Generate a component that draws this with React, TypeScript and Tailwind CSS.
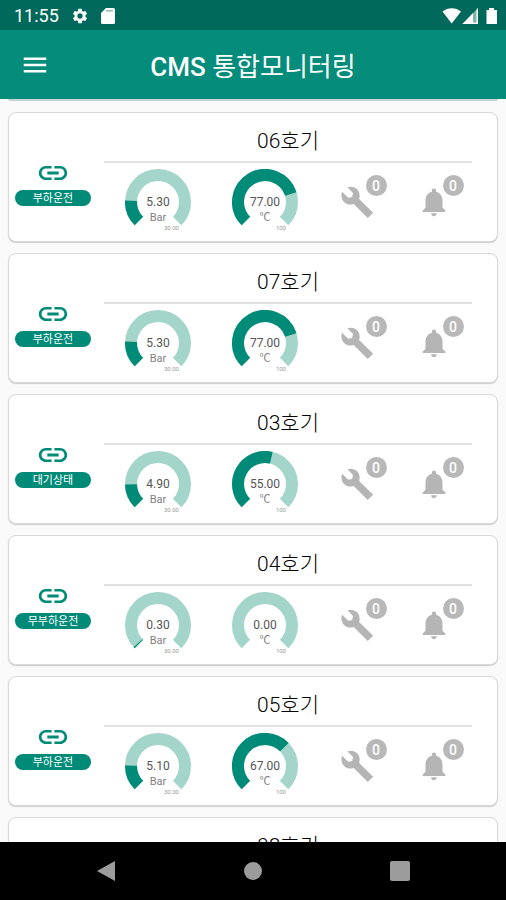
import React from "react";
import { MdLink, MdMenu, MdNotifications, MdSettings } from "react-icons/md";

type Machine = {
  name: string;
  status: string;
  pressure: number;
  temperature: number;
};

const machines: Machine[] = [
  { name: "06호기", status: "부하운전", pressure: 5.3, temperature: 77 },
  { name: "07호기", status: "부하운전", pressure: 5.3, temperature: 77 },
  { name: "03호기", status: "대기상태", pressure: 4.9, temperature: 55 },
  { name: "04호기", status: "무부하운전", pressure: 0.3, temperature: 0 },
  { name: "05호기", status: "부하운전", pressure: 5.1, temperature: 67 },
  { name: "08호기", status: "부하운전", pressure: 5.1, temperature: 67 },
];

// Ring segment that starts at the lower left and runs clockwise over 270 degrees.
function arc(fraction: number): string {
  const r = 27;
  const point = (f: number) => {
    const a = ((135 + 270 * f) * Math.PI) / 180;
    return `${(33 + r * Math.cos(a)).toFixed(2)} ${(33 + r * Math.sin(a)).toFixed(2)}`;
  };
  const large = fraction * 270 > 180 ? 1 : 0;
  return `M${point(0)} A${r} ${r} 0 ${large} 1 ${point(fraction)}`;
}

function Gauge({
  value,
  max,
  unit,
  maxLabel,
}: {
  value: number;
  max: number;
  unit: string;
  maxLabel: string;
}) {
  return (
    <svg width="66" height="64" viewBox="0 0 66 64" role="img" aria-label={`${value.toFixed(2)} ${unit}`}>
      <path d={arc(1)} fill="none" stroke="#a3d5ca" strokeWidth="12" />
      {value > 0 && <path d={arc(value / max)} fill="none" stroke="#008b78" strokeWidth="12" />}
      <text x="33" y="37" textAnchor="middle" className="fill-[#555555] text-[12px]">
        {value.toFixed(2)}
      </text>
      <text x="33" y="52" textAnchor="middle" className="fill-[#808080] text-[11px]">
        {unit}
      </text>
      <text x="54" y="61" textAnchor="end" className="fill-[#999999] text-[6px]">
        {maxLabel}
      </text>
    </svg>
  );
}

function WrenchIcon() {
  return (
    <svg width="34" height="34" viewBox="0 0 24 24" fill="currentColor" aria-hidden="true">
      <path d="M23.400 19.600L13.500 9.800C14.300 7.500 13.900 4.900 12.100 3C10.300 1.200 7.600 0.800 5.200 1.600L9.200 5.600L8.600 8.400L5.800 9L1.500 4.800C0.500 7.100 1.100 10.200 2.900 12C4.800 13.800 7.400 14.300 9.700 13.400L19.600 23.300Z" />
    </svg>
  );
}

function CountButton({
  label,
  count,
  children,
}: {
  label: string;
  count: number;
  children: React.ReactNode;
}) {
  return (
    <button type="button" aria-label={label} className="relative mt-4 text-[#b5b5b5]">
      {children}
      <span className="absolute -top-2.5 left-[26px] flex size-[21px] items-center justify-center rounded-full bg-[#b8b8b8] text-[14px] leading-none font-medium text-white">
        {count}
      </span>
    </button>
  );
}

function MachineCard({ machine }: { machine: Machine }) {
  return (
    <li className="flex h-[130px] shrink-0 rounded-lg border border-[#d9d9d9] bg-white pr-[25px] pl-1.5 shadow-[0_1px_1px_#cccccc]">
      <div className="flex w-[76px] shrink-0 flex-col items-center pt-[43px] text-[#008b78]">
        <MdLink size={34} />
        <span className="flex h-4 w-full items-center justify-center rounded-full bg-[#008b78] pt-0.5 text-[11px] leading-4 text-white">
          {machine.status}
        </span>
      </div>
      <div className="ml-[13px] min-w-0 flex-1">
        <h2 className="h-[50px] border-b-2 border-[#e0e0e0] pt-3 text-center text-[21px] leading-8 font-light text-black">
          {machine.name}
        </h2>
        <div className="grid grid-cols-[107fr_107fr_77fr_77fr] items-start justify-items-center pt-1.5">
          <Gauge value={machine.pressure} max={30} unit="Bar" maxLabel="30.00" />
          <Gauge value={machine.temperature} max={100} unit="℃" maxLabel="100" />
          <CountButton label="정비" count={0}>
            <WrenchIcon />
          </CountButton>
          <CountButton label="알람" count={0}>
            <MdNotifications size={34} />
          </CountButton>
        </div>
      </div>
    </li>
  );
}

function StatusBar() {
  return (
    <div className="flex h-[30px] shrink-0 items-center bg-[#00695b] pt-0.5 pr-2 pl-3.5 text-white">
      <span className="text-[18px] leading-6">11:55</span>
      <MdSettings size={18} className="ml-3" />
      <svg width="14" height="16" viewBox="0 0 14 16" className="ml-3" fill="currentColor" aria-hidden="true">
        <path d="M5 0H12.500Q14 0 14 1.500V14.500Q14 16 12.500 16H1.500Q0 16 0 14.500V5Z" />
        <path d="M5 2H12V3.500H5Z" fill="#00695b" fillOpacity="0.45" />
      </svg>
      <svg width="56" height="18" viewBox="0 0 56 18" className="ml-auto" fill="currentColor" aria-hidden="true">
        <path d="M0.500 4.500C5.500 0 14 0 19 4.500L9.700 16.500Z" />
        <path d="M36 1V17H20.500Z" fillOpacity="0.5" />
        <path d="M31 6V17H20.500Z" />
        <path d="M34.500 2.500L36 1V17H20.500L22.500 15.500H34.500Z" />
        <path d="M47 1H52V3H55V17H44.500V3H47Z" />
      </svg>
    </div>
  );
}

export default function App() {
  return (
    <div className="flex h-screen flex-col overflow-hidden bg-[#fafafa] font-[Roboto,'Noto_Sans_CJK_KR',sans-serif]">
      <StatusBar />
      <header className="grid h-[69px] shrink-0 grid-cols-[1fr_auto_1fr] items-center bg-[#058c7a] px-5 text-white">
        <button type="button" aria-label="메뉴" className="justify-self-start">
          <MdMenu size={30} />
        </button>
        <h1 className="pt-1 text-[26px] leading-9 font-medium">
          CMS <span className="font-normal">통합모니터링</span>
        </h1>
      </header>
      <main className="min-h-0 flex-1 overflow-hidden px-2">
        <div className="mb-[11px] h-0.5 rounded-b-lg bg-[#c9d3d2]" />
        <ul className="flex flex-col gap-[11px]">
          {machines.map((m) => (
            <MachineCard key={m.name} machine={m} />
          ))}
        </ul>
      </main>
      <nav className="grid h-[58px] shrink-0 grid-cols-3 items-center justify-items-center bg-black px-8 text-[#9c9c9c]">
        <button type="button" aria-label="뒤로">
          <svg width="20" height="20" viewBox="0 0 20 20" fill="currentColor">
            <path d="M19 0V20L1 10Z" />
          </svg>
        </button>
        <button type="button" aria-label="홈" className="size-[18px] rounded-full bg-[#9c9c9c]" />
        <button type="button" aria-label="최근 앱" className="size-5 rounded-xs bg-[#9c9c9c]" />
      </nav>
    </div>
  );
}
